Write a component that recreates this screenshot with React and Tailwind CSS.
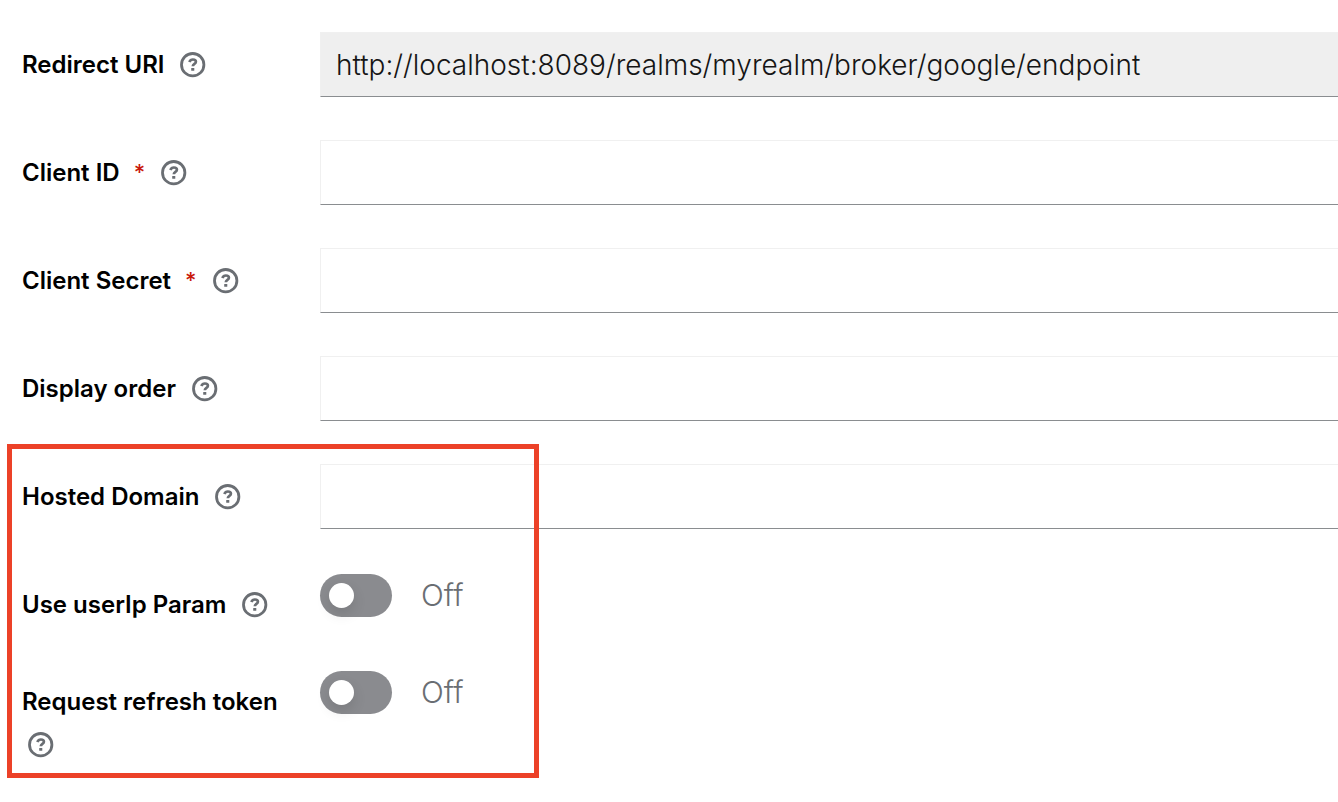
function HelpIcon() {
  return (
    <svg viewBox="0 0 26 26" className="block size-[26px]" fill="none" aria-hidden="true">
      <circle cx="12.7" cy="12.7" r="11.2" stroke="#6a6e73" strokeWidth="2.8" />
      <path
        d="M9.3 10C10 8.3 11.3 7.5 12.9 7.5C14.7 7.5 15.9 8.5 15.9 9.8C15.9 11.9 12.8 11.8 12.8 14.2"
        stroke="#6a6e73"
        strokeWidth="2.7"
      />
      <rect x="11.2" y="15.9" width="3.1" height="2.9" rx="0.5" fill="#6a6e73" />
    </svg>
  );
}

function Row({ id, label, required, children }) {
  return (
    <div className="grid grid-cols-[298px_minmax(0,1fr)]">
      <div className="flex flex-wrap content-start items-center pt-[11px] text-[24px] leading-[43px] font-semibold text-black">
        <label htmlFor={id} className="mr-[10px] flex">
          {label}
          {required && (
            <span className="ml-[14px] text-[22px] font-medium text-[#c9190b]">*</span>
          )}
        </label>
        <button
          type="button"
          aria-label={`Help for ${label}`}
          className="-ml-1 flex h-[43px] items-center pr-[6px] pl-[10px]"
        >
          <HelpIcon />
        </button>
      </div>
      {children}
    </div>
  );
}

function TextRow({ id, label, required, value, readOnly }) {
  return (
    <Row id={id} label={label} required={required}>
      <input
        id={id}
        type="text"
        defaultValue={value}
        readOnly={readOnly}
        required={required}
        className="h-[65px] w-full rounded-none border border-r-0 border-[#f0f0f0] border-b-[#8a8d90] bg-white px-[15px] text-[28px] font-[350] text-[#151515] outline-none read-only:bg-[#efefef]"
      />
    </Row>
  );
}

function SwitchRow({ id, label }) {
  return (
    <Row id={id} label={label}>
      <div className="flex items-start pt-[2px]">
        <input
          id={id}
          type="checkbox"
          role="switch"
          className="h-[43px] w-[72px] shrink-0 appearance-none rounded-full bg-[#8a8b8f] p-[9px] before:block before:size-[25px] before:rounded-full before:bg-white before:shadow-[0_6px_14px_rgba(3,3,3,0.12)] before:content-['']"
        />
        <span className="ml-[29px] text-[30px] leading-[42px] font-[350] text-[#6a6e73]">Off</span>
      </div>
    </Row>
  );
}

export default function App() {
  return (
    <main className="min-h-screen overflow-hidden bg-white pt-8 font-['Inter',sans-serif]">
      <form className="flex flex-col gap-[43px]">
        <div className="flex flex-col gap-[43px] pl-[22px]">
          <TextRow
            id="redirect-uri"
            label="Redirect URI"
            value="http://localhost:8089/realms/myrealm/broker/google/endpoint"
            readOnly
          />
          <TextRow id="client-id" label="Client ID" required />
          <TextRow id="client-secret" label="Client Secret" required />
          <TextRow id="display-order" label="Display order" />
        </div>
        <div className="relative flex flex-col gap-[43px] pl-[22px]">
          <TextRow id="hosted-domain" label="Hosted Domain" />
          <SwitchRow id="user-ip" label="Use userIp Param" />
          <SwitchRow id="refresh-token" label="Request refresh token" />
          <div className="pointer-events-none absolute -top-5 -bottom-3 left-[7px] w-[532px] border-[5px] border-[#ec4128]" />
        </div>
      </form>
    </main>
  );
}
